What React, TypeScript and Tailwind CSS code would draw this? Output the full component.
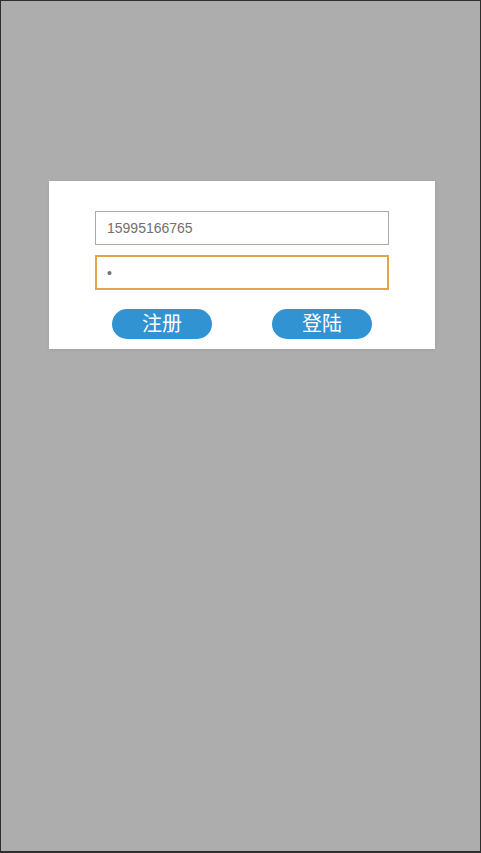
export default function App() {
  return (
    <div
      className="w-[481px] h-[853px] bg-[#adadad] border border-b-2 border-[#2e2e2e] box-border"
      style={{ fontFamily: '"Liberation Sans", "Noto Sans CJK SC", sans-serif' }}
    >
      <div className="pt-[180px] pl-[48px]">
        <div className="w-[386px] bg-white pt-[30px] pb-[10px] shadow-[0_1px_3px_rgba(0,0,0,0.08)]">
          <div className="flex flex-col items-center gap-[10px]">
            <input
              readOnly
              value="15995166765"
              className="w-[294px] h-[34px] border border-[#a9a9a9] px-[11px] text-[14px] text-[#707070] outline-none"
            />
            <input
              readOnly
              type="password"
              value="1"
              className="w-[294px] h-[35px] border-2 border-[#e2a649] px-[10px] text-[14px] text-[#707070] outline-none"
            />
          </div>
          <div className="flex justify-center gap-[60px] mt-[19px]">
            <button className="w-[100px] h-[30px] rounded-[15px] bg-[#3193d2] text-white text-[20px] leading-[30px]">
              注册
            </button>
            <button className="w-[100px] h-[30px] rounded-[15px] bg-[#3193d2] text-white text-[20px] leading-[30px]">
              登陆
            </button>
          </div>
        </div>
      </div>
    </div>
  );
}
